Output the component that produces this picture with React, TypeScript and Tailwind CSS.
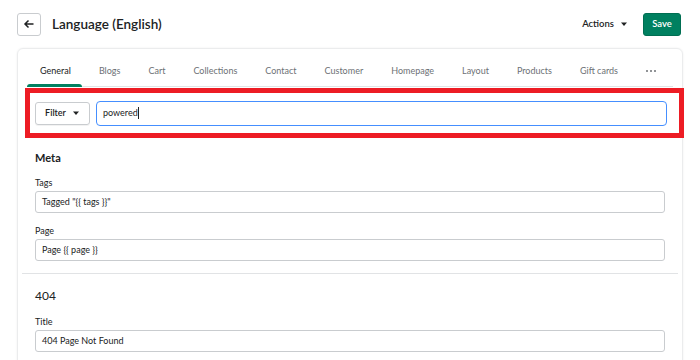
import React from 'react';

const tabs = ['General', 'Blogs', 'Cart', 'Collections', 'Contact', 'Customer', 'Homepage', 'Layout', 'Products', 'Gift cards'];

const Field: React.FC<{ label: string; value: string }> = ({ label, value }) => (
  <div className="flex flex-col">
    <label className="text-[9px] text-[#202223] leading-[10px] mb-[3px]">{label}</label>
    <div className="h-[22px] w-[630px] border border-[#c9cccf] rounded-[3px] px-[6px] flex items-center text-[9px] text-[#202223]">{value}</div>
  </div>
);

const App: React.FC = () => {
  return (
    <div className="w-[700px] h-[360px] bg-white overflow-hidden text-[#202223]" style={{ fontFamily: 'Lato, "Open Sans", sans-serif' }}>
      {/* Header */}
      <div className="flex items-center h-[48px] pl-[17px] pr-[19px]">
        <button className="w-[24px] h-[23px] border border-[#c9cccf] rounded-[3px] flex items-center justify-center">
          <svg width="12" height="12" viewBox="0 0 12 12" fill="none" stroke="#202223" strokeWidth="1.5">
            <path d="M10.5 6H2M5.5 2.5L2 6l3.5 3.5" />
          </svg>
        </button>
        <h1 className="ml-[11px] text-[13.5px] font-semibold">Language (English)</h1>
        <div className="ml-auto flex items-center">
          <span className="text-[9.5px] font-semibold">Actions</span>
          <svg width="8" height="8" viewBox="0 0 8 8" className="ml-[6px]"><path d="M1 2.5h6L4 6z" fill="#202223" /></svg>
          <button className="ml-[15px] w-[38px] h-[23px] bg-[#008060] rounded-[3px] text-white text-[9.5px] font-semibold border border-[#006e52]">Save</button>
        </div>
      </div>

      {/* Card */}
      <div className="ml-[17px] w-[666px] h-[320px] border border-[#ebeced] rounded-[6px] shadow-[0_0_2px_rgba(0,0,0,0.08)]">
        <div className="mx-[9px] h-[38px] border-b border-[#e1e3e5] px-[13px] flex items-end justify-between">
          {tabs.map((t, i) => (
            <div key={t} className={`relative h-full pt-[6px] flex items-center whitespace-nowrap text-[9px] ${i === 0 ? 'text-[#202223]' : 'text-[#6d7175]'}`}>
              {t}
              {i === 0 && <div className="absolute left-[-13px] right-[-11px] bottom-[-1px] h-[3px] bg-[#008060] rounded-t" />}
            </div>
          ))}
          <div className="h-full pt-[6px] flex items-center gap-[2px] mr-[4px]">
            <span className="w-[2px] h-[2px] rounded-full bg-[#6d7175]" />
            <span className="w-[2px] h-[2px] rounded-full bg-[#6d7175]" />
            <span className="w-[2px] h-[2px] rounded-full bg-[#6d7175]" />
          </div>
        </div>

        {/* Filter row */}
        <div className="ml-[7px] mt-[1px] w-[659px] h-[50px] border-[5px] border-[#ed1c24] flex items-center pl-[5px] pr-[12px]">
          <button className="w-[55px] h-[23px] border border-[#c9cccf] rounded-[3px] flex items-center justify-center text-[9px] font-semibold shadow-[0_1px_0_rgba(0,0,0,0.05)]">
            Filter
            <svg width="8" height="8" viewBox="0 0 8 8" className="ml-[6px]"><path d="M1 2.5h6L4 6z" fill="#202223" /></svg>
          </button>
          <div className="ml-[6px] flex-1 h-[25px] border-[1.5px] border-[#458fff] rounded-[4px] flex items-center px-[6px] text-[9px]">
            powered<span className="w-px h-[12px] bg-[#202223]" />
          </div>
        </div>

        {/* Meta */}
        <div className="px-[17px] pt-[14px]">
          <h2 className="text-[11px] font-bold leading-none mb-[15px]">Meta</h2>
          <div className="flex flex-col gap-[13px]">
            <Field label="Tags" value={'Tagged "{{ tags }}"'} />
            <Field label="Page" value="Page {{ page }}" />
          </div>
        </div>
        <div className="mx-[4px] mt-[12px] border-t border-[#e1e3e5]" />
        <div className="px-[17px] pt-[16px]">
          <h2 className="text-[12px] leading-none mb-[15px]">404</h2>
          <Field label="Title" value="404 Page Not Found" />
        </div>
      </div>
    </div>
  );
};

export default App;
